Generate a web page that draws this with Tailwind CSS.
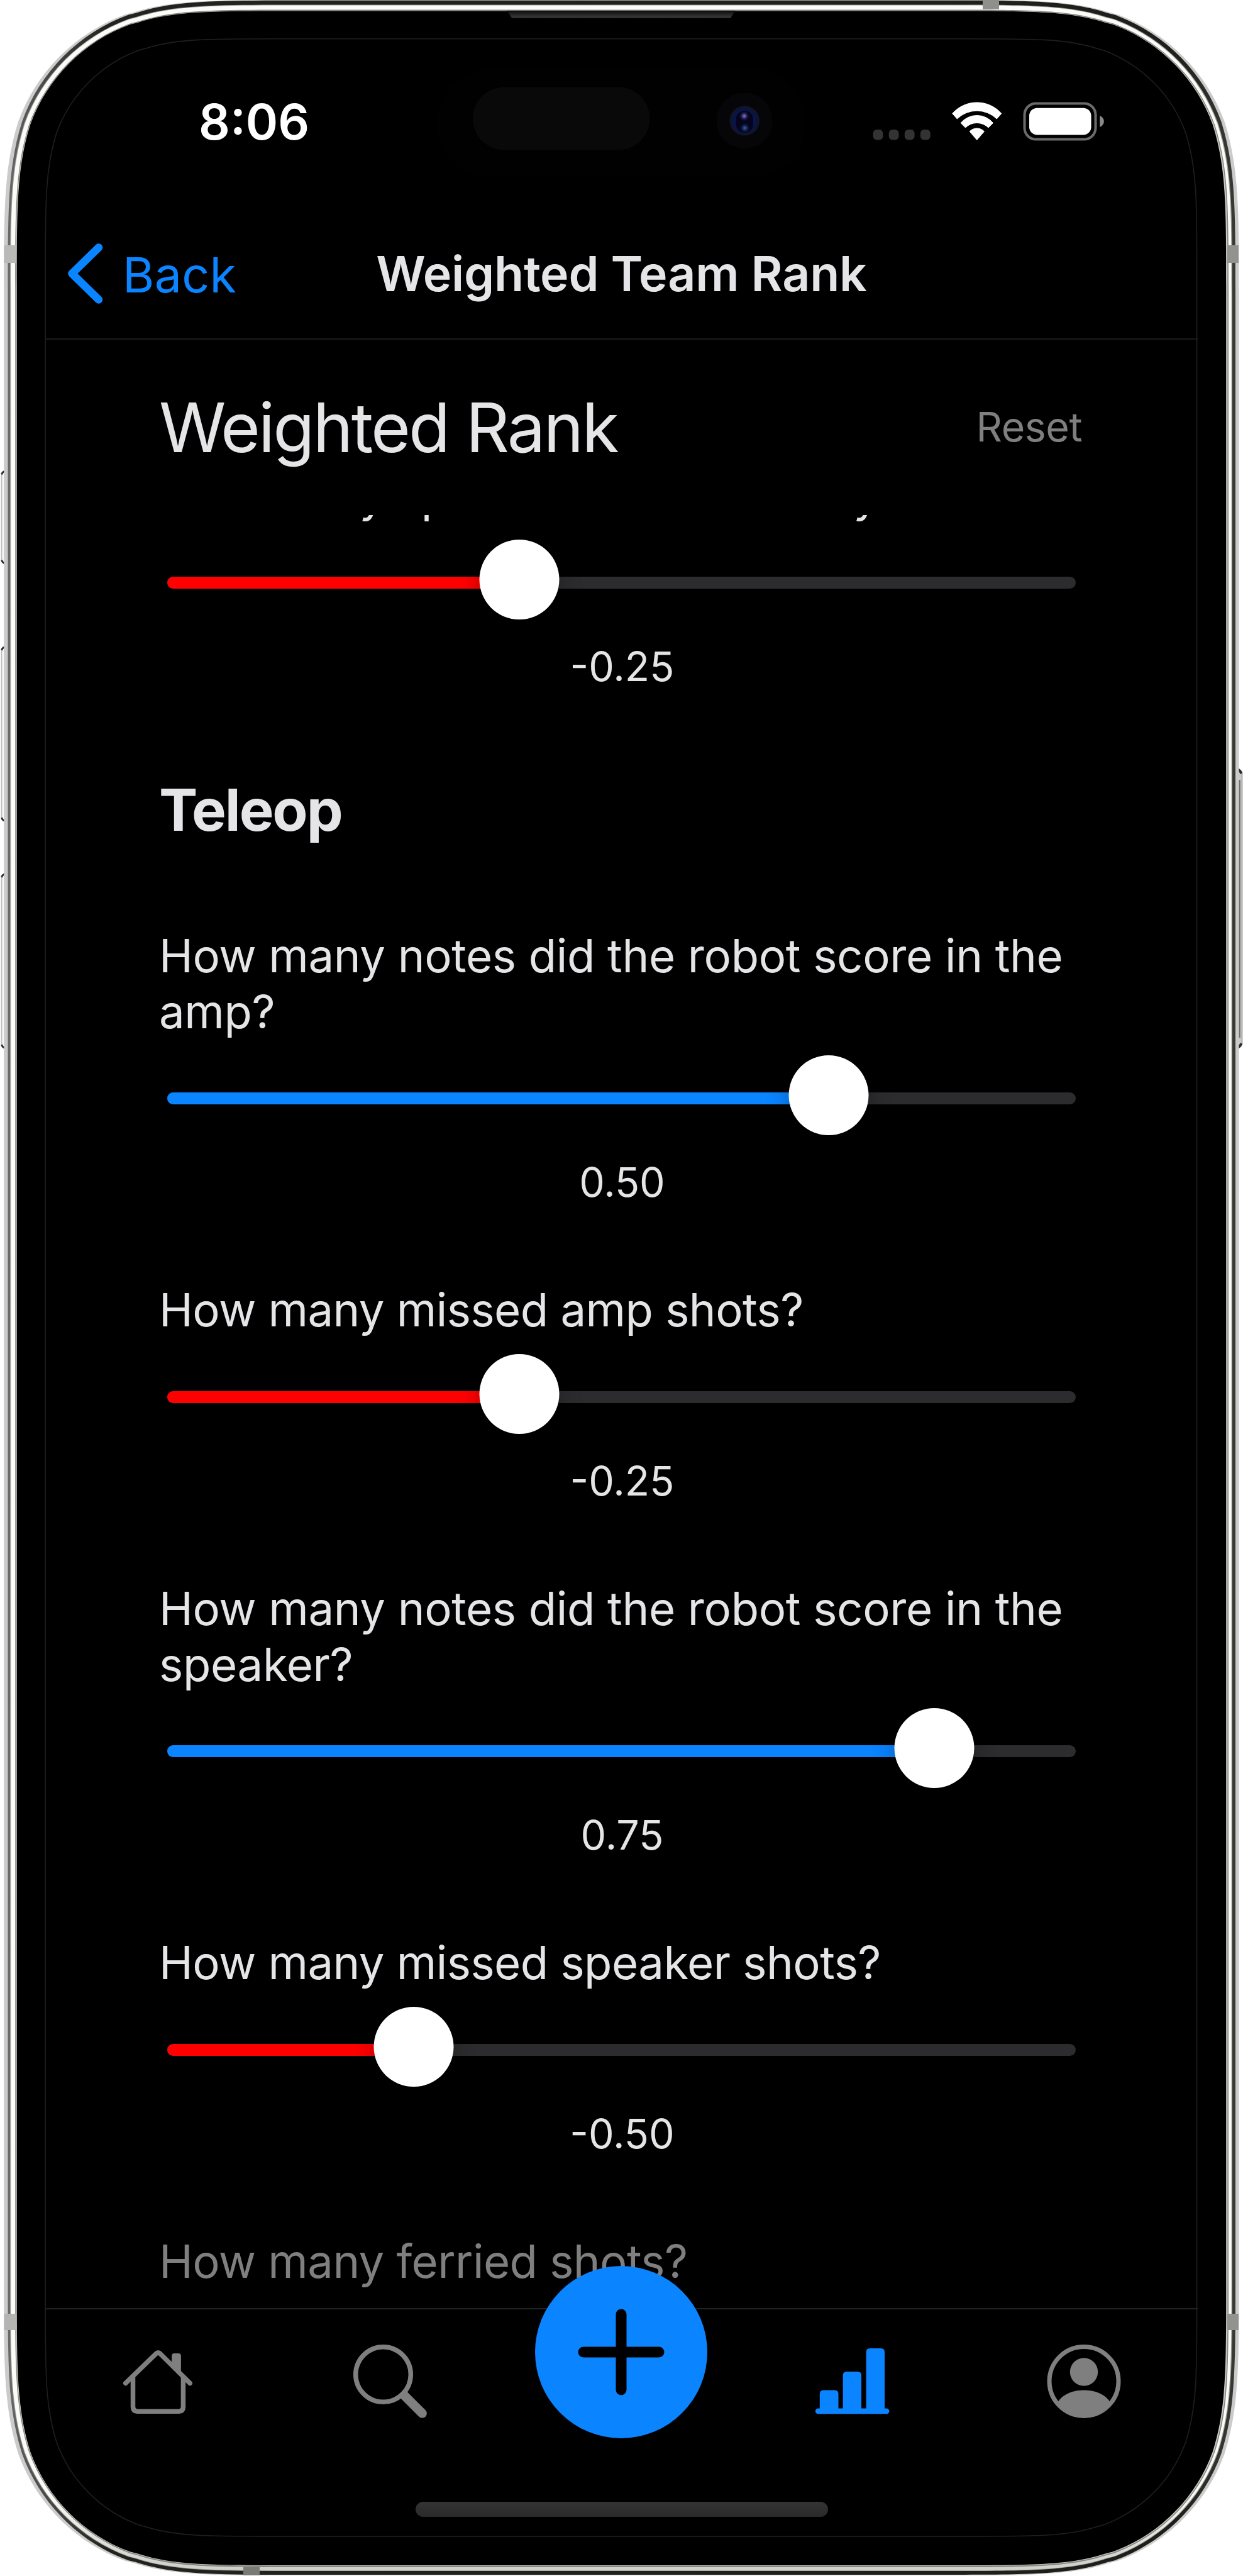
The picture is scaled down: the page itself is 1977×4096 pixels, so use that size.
<!DOCTYPE html>
<html lang="en">
<head>
<meta charset="utf-8">
<title>Weighted Team Rank</title>
<script src="https://cdn.jsdelivr.net/npm/@tailwindcss/browser@4"></script>
</head>
<body class="bg-white font-['Inter',sans-serif] text-[#e5e5e7]">
<div class="relative w-[1977px] h-[4096px] overflow-hidden">

  <!-- Device frame -->
  <svg class="absolute inset-0" width="1977" height="4096" viewBox="0 0 1977 4096">
    <defs>
      <linearGradient id="rim" x1="0" x2="1" y1="0" y2="0">
        <stop offset="0" stop-color="#6b6b69"/><stop offset=".01" stop-color="#5a5a58"/><stop offset=".08" stop-color="#22221e"/><stop offset=".95" stop-color="#1e1e1a"/><stop offset="1" stop-color="#3a3a35"/>
      </linearGradient>
      <linearGradient id="shine" x1="0" x2="0" y1="0" y2="1">
        <stop offset="0" stop-color="#fbfbf9"/><stop offset=".97" stop-color="#fbfbf9"/><stop offset="1" stop-color="#cfceca"/>
      </linearGradient>
      <linearGradient id="speaker" x1="0" x2="0" y1="0" y2="1">
        <stop offset="0" stop-color="#0c0c0c"/><stop offset="1" stop-color="#3c3c3c"/>
      </linearGradient>
      <radialGradient id="glintA"><stop offset="0" stop-color="#8a86e8"/><stop offset="1" stop-color="#1a1650" stop-opacity="0"/></radialGradient>
      <radialGradient id="glintB"><stop offset="0" stop-color="#2f74a8"/><stop offset="1" stop-color="#0a1a60" stop-opacity="0"/></radialGradient>
    </defs>
    <!-- side buttons -->
    <g fill="#f8f8f6" stroke="#bcbcbc" stroke-width="1.8">
      <rect x="2.5" y="749.5" width="14" height="146" rx="7"/>
      <rect x="2.5" y="1029" width="14" height="276" rx="7"/>
      <rect x="2.5" y="1390" width="14" height="276" rx="7"/>
      <rect x="1960" y="1223" width="15.5" height="443" rx="8" fill="#c8c8c6" stroke="#a6a6a6"/>
    </g>
    <path d="M1971.6 1240V1650" stroke="#6c6c68" stroke-width="2.4"/>
    <g fill="none" stroke="#2b2b2b" stroke-width="2.8">
      <path d="M2.500 754.500Q4 750 8 749.200M2.500 890.500Q4 895 8 896M2.500 1034Q4 1029.500 8 1028.700M2.500 1300Q4 1304.500 8 1305.300M2.500 1395Q4 1390.500 8 1389.700M2.500 1661Q4 1665.500 8 1666.300"/>
      <path stroke-width="4" d="M1969.500 1223.500Q1973 1226 1974.500 1230M1969.500 1665.500Q1973 1663 1974.500 1659"/>
    </g>
    <g id="rings"></g>
    <!-- antenna bands -->
    <rect x="6.500" y="390" width="19.500" height="28" fill="#b9b9b8"/>
    <rect x="6.500" y="3679" width="19.500" height="26" fill="#b4b4b2"/>
    <rect x="1951.500" y="390" width="18.500" height="28" fill="#929291"/>
    <rect x="1951.500" y="3679" width="18.500" height="26" fill="#929291"/>
    <rect x="1563" y="0" width="26" height="14.500" fill="#8f908b"/>
    <rect x="387" y="4082" width="26" height="13" fill="#7a7a77"/>
    <!-- earpiece -->
    <path d="M806.500 17H1169.500L1162 28.500H814Z" fill="url(#speaker)"/>
    <!-- sensor island -->
    <rect x="695" y="109" width="586" height="173" rx="86.500" fill="#010101"/>
    <rect x="752" y="138.500" width="281.500" height="100" rx="50" fill="#090909"/>
    <circle cx="1184" cy="192" r="44.500" fill="#060508"/>
    <circle cx="1184.200" cy="192" r="23.800" fill="#10142c"/>
    <circle cx="1184.200" cy="192" r="19" fill="#06164a"/>
    <rect x="1170.500" y="176" width="27.500" height="35" rx="13.700" fill="#06041c"/>
    <circle cx="1183.700" cy="184.500" r="8" fill="url(#glintA)"/>
    <circle cx="1184.700" cy="203.500" r="8" fill="url(#glintB)"/>
  </svg>

  <!-- Screen -->
  <div class="relative flex flex-col h-full px-[72px]">

    <!-- Status bar -->
    <div class="flex items-start h-[330px] pl-[244px] pr-[149px]">
      <div class="mt-[154px] text-[78px] leading-[80px] font-semibold text-white">8:06</div>
      <div class="ml-auto mt-[162px] flex items-start">
        <svg class="mr-[34px]" width="92" height="62" viewBox="0 0 92 62" fill="#333">
          <rect x="0.600" y="44" width="15.800" height="16.500" rx="6"/><rect x="25.700" y="44" width="15.800" height="16.500" rx="6"/><rect x="50.800" y="44" width="15.800" height="16.500" rx="6"/><rect x="75.900" y="44" width="15.800" height="16.500" rx="6"/>
        </svg>
        <svg class="mr-[33px]" width="80" height="62" viewBox="0 -1 80 62" fill="#fff" stroke="#fff" stroke-linejoin="round">
          <path d="M.8 17.500A52 52 0 0 1 78.800 17.500L71.300 26A45 45 0 0 0 8.300 26Z"/>
          <path d="M14.100 32.500A33.500 33.500 0 0 1 65.500 32.500L58.100 40A26 26 0 0 0 21.500 40Z"/>
          <path d="M28.200 46A16 16 0 0 1 51.400 46L39.800 59.500Z"/>
        </svg>
        <svg width="129" height="62" viewBox="0 0 129 62">
          <rect x="2.500" y="2.500" width="113" height="57" rx="18" fill="none" stroke="#6b6b6b" stroke-width="4"/>
          <rect x="10" y="9.700" width="98.500" height="42.800" rx="12.500" fill="#fff"/>
          <path d="M122.300 22C131 26 131 36 122.300 40Z" fill="#8a8a8a"/>
        </svg>
      </div>
    </div>

    <!-- Navigation bar -->
    <div class="grid grid-cols-[1fr_auto_1fr] items-center h-[210px] pt-[2px] border-b-2 border-[#1b1b1c]">
      <div class="flex items-center gap-[31px] pl-[35px] text-[#0a84ff]">
        <svg width="57" height="98" viewBox="0 0 57 98" fill="none" stroke="#0a84ff" stroke-width="12.500" stroke-linecap="round" stroke-linejoin="round"><path d="M50 7.500L7.500 49L50 90.500"/></svg>
        <span class="pt-[4px] text-[77px] leading-[80px] tracking-[0.3px]">Back</span>
      </div>
      <h1 class="text-[77px] leading-[80px] font-semibold tracking-[-0.2px] whitespace-nowrap">Weighted Team Rank</h1>
    </div>

    <!-- Page header -->
    <div class="flex justify-between items-start h-[279px] pt-[75px] pl-[181px] pr-[184px]">
      <h2 class="text-[108px] leading-[130px] tracking-[-2.9px]">Weighted Rank</h2>
      <button class="mt-[24px] text-[64.5px] leading-[80px] tracking-[-0.5px] text-[#7f7f7f]">Reset</button>
    </div>

    <!-- Weights -->
    <div class="h-[2851px] overflow-hidden px-[181px]">
      <div class="-mt-[75px]">
        <p class="text-[72.5px] leading-[88.6px] tracking-[-0.45px] whitespace-nowrap">How many speaker shots did they miss?</p>
        <div class="relative mt-[25px] mx-[13px] h-[127px] pt-[59px]">
          <div class="h-[19px] rounded-full bg-[#2c2c2e] overflow-hidden"><div class="h-full bg-[#ff0000]" style="width:38.75%"></div></div>
          <div class="absolute top-0 size-[127px] -translate-x-1/2 rounded-full bg-white shadow-[0_4px_36px_rgba(0,0,0,0.3)]" style="left:38.75%"></div>
        </div>
        <div class="mt-[35px] pl-[2px] text-center text-[64.5px] leading-[80px]">-0.25</div>
      </div>

      <h3 class="mt-[133px] text-[92px] leading-[110px] font-bold tracking-[-2.1px]">Teleop</h3>

      <div class="mt-[133.5px] flex flex-col gap-[119.1px]">
        <div>
          <p class="text-[72.5px] leading-[88.6px] tracking-[-0.36px]">How many notes did the robot score in the amp?</p>
          <div class="relative mt-[25px] mx-[13px] h-[127px] pt-[59px]">
            <div class="h-[19px] rounded-full bg-[#2c2c2e] overflow-hidden"><div class="h-full bg-[#0a84ff]" style="width:72.8%"></div></div>
            <div class="absolute top-0 size-[127px] -translate-x-1/2 rounded-full bg-white shadow-[0_4px_36px_rgba(0,0,0,0.3)]" style="left:72.8%"></div>
          </div>
          <div class="mt-[35px] pl-[2px] text-center text-[64.5px] leading-[80px]">0.50</div>
        </div>
        <div>
          <p class="text-[72.5px] leading-[88.6px] tracking-[-0.57px]">How many missed amp shots?</p>
          <div class="relative mt-[25px] mx-[13px] h-[127px] pt-[59px]">
            <div class="h-[19px] rounded-full bg-[#2c2c2e] overflow-hidden"><div class="h-full bg-[#ff0000]" style="width:38.75%"></div></div>
            <div class="absolute top-0 size-[127px] -translate-x-1/2 rounded-full bg-white shadow-[0_4px_36px_rgba(0,0,0,0.3)]" style="left:38.75%"></div>
          </div>
          <div class="mt-[35px] pl-[2px] text-center text-[64.5px] leading-[80px]">-0.25</div>
        </div>
        <div>
          <p class="text-[72.5px] leading-[88.6px] tracking-[-0.36px]">How many notes did the robot score in the speaker?</p>
          <div class="relative mt-[25px] mx-[13px] h-[127px] pt-[59px]">
            <div class="h-[19px] rounded-full bg-[#2c2c2e] overflow-hidden"><div class="h-full bg-[#0a84ff]" style="width:84.45%"></div></div>
            <div class="absolute top-0 size-[127px] -translate-x-1/2 rounded-full bg-white shadow-[0_4px_36px_rgba(0,0,0,0.3)]" style="left:84.45%"></div>
          </div>
          <div class="mt-[35px] pl-[2px] text-center text-[64.5px] leading-[80px]">0.75</div>
        </div>
        <div>
          <p class="text-[72.5px] leading-[88.6px] tracking-[-0.57px]">How many missed speaker shots?</p>
          <div class="relative mt-[25px] mx-[13px] h-[127px] pt-[59px]">
            <div class="h-[19px] rounded-full bg-[#2c2c2e] overflow-hidden"><div class="h-full bg-[#ff0000]" style="width:27.1%"></div></div>
            <div class="absolute top-0 size-[127px] -translate-x-1/2 rounded-full bg-white shadow-[0_4px_36px_rgba(0,0,0,0.3)]" style="left:27.1%"></div>
          </div>
          <div class="mt-[35px] pl-[2px] text-center text-[64.5px] leading-[80px]">-0.50</div>
        </div>
        <p class="text-[72.5px] leading-[88.6px] tracking-[-0.6px] text-[#7f7f7f]">How many ferried shots?</p>
      </div>
    </div>

    <!-- Tab bar -->
    <div class="grid grid-cols-5 justify-items-center h-[186px] border-t-2 border-[#222223] pt-[44px]">
      <svg width="140" height="140" viewBox="185.300 3716 140 140" fill="none" stroke="#7f7f7f" stroke-width="7.500" stroke-linecap="round" stroke-linejoin="round">
        <path d="M200 3789.500L248.500 3742.500Q251.700 3739.500 255 3742.500L302.500 3789.500"/>
        <path d="M211.800 3780V3826.500Q211.800 3834.300 219.500 3834.300H284Q291.700 3834.300 291.700 3826.500V3780" stroke-linecap="butt"/>
        <path d="M273.400 3762V3746Q273.400 3742 277.400 3742H284.200Q288.200 3742 288.200 3746V3777Z" fill="#7f7f7f" stroke="none"/>
      </svg>
      <svg width="140" height="140" viewBox="551.900 3716 140 140" fill="none" stroke="#7f7f7f">
        <circle cx="609.400" cy="3775.500" r="43.800" stroke-width="7.500"/>
        <path d="M643 3809L671.500 3837.500" stroke-width="14.500" stroke-linecap="round"/>
      </svg>
      <div class="relative w-full">
        <div class="absolute -top-[113px] left-1/2 ml-[-137px] size-[274px] rounded-full bg-[#0a84ff]">
          <svg width="274" height="274" viewBox="0 0 274 274" stroke="#000" stroke-width="17" stroke-linecap="round"><path d="M137 77V197M77 137H197"/></svg>
        </div>
      </div>
      <svg width="140" height="140" viewBox="1285 3716 140 140" fill="#0a84ff">
        <rect x="1296.800" y="3829.500" width="117.600" height="8.800" rx="4.400"/>
        <path d="M1303.800 3831V3806.500Q1303.800 3800.500 1309.800 3800.500H1327.500Q1333.500 3800.500 1333.500 3806.500V3831Z"/>
        <path d="M1340.700 3831V3777Q1340.700 3771 1346.700 3771H1364Q1370 3771 1370 3777V3831Z"/>
        <path d="M1377.600 3831V3740Q1377.600 3734 1383.600 3734H1401Q1407 3734 1407 3740V3831Z"/>
      </svg>
      <svg width="140" height="140" viewBox="1652 3716 140 140" fill="#7f7f7f">
        <circle cx="1724" cy="3786.500" r="55" fill="none" stroke="#7f7f7f" stroke-width="7"/>
        <circle cx="1724" cy="3771.500" r="22.200"/>
        <path d="M1683.500 3817.800C1691 3807 1706 3800.500 1724 3800.500S1757 3807 1764.500 3817.800L1766 3822A55 55 0 0 1 1682 3822Z"/>
      </svg>
    </div>
    <div class="mt-[122px] mx-auto w-[656px] h-[24px] rounded-full bg-linear-to-b from-[#343434] to-[#2a2a2a]"></div>
  </div>
</div>

<script>
  // Continuous-corner rounded rectangle as path data
  function squircle(l, t, r, b, k) {
    const C = [[1.52867, 0], [1.08849, 0], [.86841, 0], [.66993, .0655], [.63149, .07491], [.37282, .16906], [.16906, .37282], [.07491, .63149], [0, .86841], [0, 1.08849], [0, 1.52867]].map(p => [p[0] * k, p[1] * k]);
    const corner = (f, reverse, cmd) => {
      const p = (reverse ? [...C].reverse() : C).map(q => f(q).map(n => n.toFixed(2)).join(' '));
      return reverse
        ? `${cmd}${p[0]}C${p[1]} ${p[2]} ${p[3]}C${p[4]} ${p[5]} ${p[6]}L${p[7]}C${p[8]} ${p[9]} ${p[10]}`
        : `${cmd}${p[0]}C${p[1]} ${p[2]} ${p[3]}L${p[4]}C${p[5]} ${p[6]} ${p[7]}C${p[8]} ${p[9]} ${p[10]}`;
    };
    return corner(([x, y]) => [l + x, t + y], false, 'M')
      + corner(([x, y]) => [l + x, b - y], true, 'L')
      + corner(([x, y]) => [r - x, b - y], false, 'L')
      + corner(([x, y]) => [r - x, t + y], true, 'L') + 'Z';
  }
  const layers = [
    [6.2, 0, 1970.5, 4095, 306, '#cbcbcb'],
    [12.5, .8, 1965, 4094, 304, 'url(#rim)'],
    [16, 7.5, 1960, 4088, 299, '#999997'],
    [17.2, 8.5, 1958.6, 4087.2, 298, 'url(#shine)'],
    [24.2, 15.5, 1954, 4082, 290, '#85857f'],
    [25.5, 17, 1952.4, 4080, 288, '#c8c8c4'],
    [26.8, 17.4, 1950.2, 4079, 286, '#000']
  ];
  document.getElementById('rings').innerHTML =
    layers.map(([l, t, r, b, k, c]) => `<path d="${squircle(l, t, r, b, k)}" fill="${c}"/>`).join('')
    + `<path d="${squircle(72.2, 61.7, 1903.6, 4033, 237)}" fill="none" stroke="#1f1f1f" stroke-width="1.6"/>`;
</script>
</body>
</html>
